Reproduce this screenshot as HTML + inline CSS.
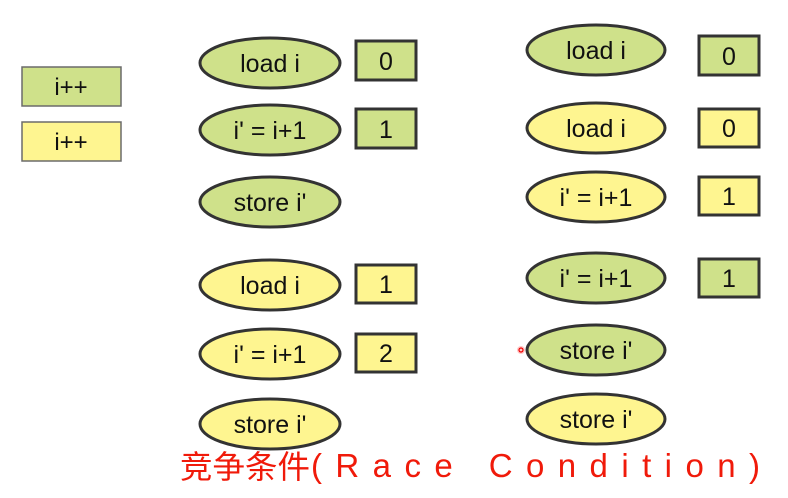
<!DOCTYPE html>
<html><head><meta charset="utf-8"><style>html,body{margin:0;padding:0;background:#fff}svg{display:block}</style></head>
<body>
<svg width="788" height="498" viewBox="0 0 788 498" xmlns="http://www.w3.org/2000/svg" font-family="Liberation Sans, sans-serif">
<g stroke="#6b6b6b" stroke-width="1.5">
<rect x="22" y="67" width="99" height="39" fill="#cfe18a"/>
<rect x="22" y="122" width="99" height="39" fill="#fef590"/>
</g>
<g font-size="24" text-anchor="middle" fill="#111">
<text x="71" y="95">i++</text>
<text x="71" y="150">i++</text>
</g>
<g stroke="#333" stroke-width="3">
<ellipse cx="270" cy="63" rx="70" ry="25" fill="#cfe18a"/>
<ellipse cx="270" cy="130" rx="70" ry="25" fill="#cfe18a"/>
<ellipse cx="270" cy="202" rx="70" ry="25" fill="#cfe18a"/>
<ellipse cx="270" cy="285" rx="70" ry="25" fill="#fef590"/>
<ellipse cx="270" cy="354" rx="70" ry="25" fill="#fef590"/>
<ellipse cx="270" cy="424" rx="70" ry="25" fill="#fef590"/>
<ellipse cx="596" cy="50" rx="69" ry="25" fill="#cfe18a"/>
<ellipse cx="596" cy="128" rx="69" ry="25" fill="#fef590"/>
<ellipse cx="596" cy="197" rx="69" ry="25" fill="#fef590"/>
<ellipse cx="596" cy="278" rx="69" ry="25" fill="#cfe18a"/>
<ellipse cx="596" cy="350" rx="69" ry="25" fill="#cfe18a"/>
<ellipse cx="596" cy="419" rx="69" ry="25" fill="#fef590"/>
<rect x="356" y="41" width="60" height="39" fill="#cfe18a"/>
<rect x="356" y="109" width="60" height="39" fill="#cfe18a"/>
<rect x="356" y="265" width="60" height="38" fill="#fef590"/>
<rect x="356" y="334" width="60" height="38" fill="#fef590"/>
<rect x="699" y="36" width="60" height="39" fill="#cfe18a"/>
<rect x="699" y="109" width="60" height="38" fill="#fef590"/>
<rect x="699" y="177" width="60" height="38" fill="#fef590"/>
<rect x="699" y="259" width="60" height="38" fill="#cfe18a"/>
</g>
<g font-size="25" text-anchor="middle" fill="#111">
<text x="270" y="72">load i</text>
<text x="270" y="139">i' = i+1</text>
<text x="270" y="211">store i'</text>
<text x="270" y="294">load i</text>
<text x="270" y="363">i' = i+1</text>
<text x="270" y="433">store i'</text>
<text x="596" y="59">load i</text>
<text x="596" y="137">load i</text>
<text x="596" y="206">i' = i+1</text>
<text x="596" y="287">i' = i+1</text>
<text x="596" y="359">store i'</text>
<text x="596" y="428">store i'</text>
<text x="386" y="70">0</text>
<text x="386" y="138">1</text>
<text x="386" y="293">1</text>
<text x="386" y="362">2</text>
<text x="729" y="65">0</text>
<text x="729" y="137">0</text>
<text x="729" y="205">1</text>
<text x="729" y="287">1</text>
</g>
<circle cx="521" cy="350" r="4" fill="#ffb0b0" opacity="0.7"/>
<circle cx="521" cy="350" r="2" fill="none" stroke="#e00" stroke-width="1.2"/>
<text x="180" y="478" font-size="32" fill="#f01a0a" font-family="Noto Sans CJK SC, sans-serif" textLength="130" lengthAdjust="spacingAndGlyphs">竞争条件</text>
<text x="311" y="477" font-size="33" fill="#f01a0a" font-family="Liberation Sans, sans-serif" textLength="449" lengthAdjust="spacing">(Race Condition)</text>
</svg>
</body></html>
